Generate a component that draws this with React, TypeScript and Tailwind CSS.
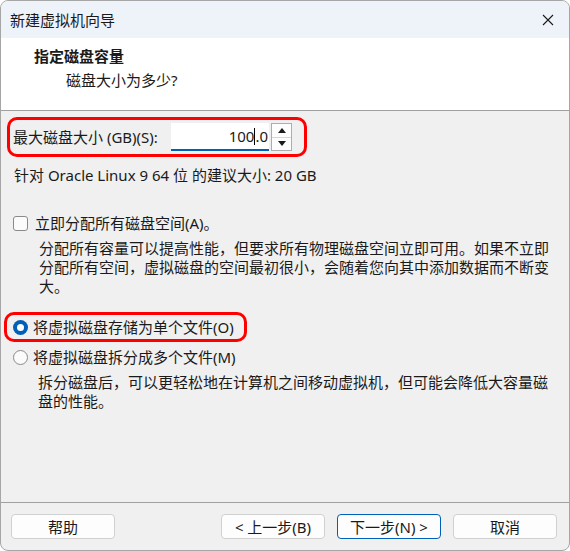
import { useState } from "react";

const font = "font-['Noto_Sans','Noto_Sans_CJK_SC',sans-serif]";

function Btn({ label, primary }: { label: React.ReactNode; primary?: boolean }) {
  return (
    <button
      className={
        "w-[104px] h-[25px] rounded-[4px] bg-[#fdfdfd] text-[15px] leading-[20px] text-[#1a1a1a] border " +
        (primary ? "border-[#005fb8]" : "border-[#d0d0d0]")
      }
    >
      {label}
    </button>
  );
}

function Radio({ on }: { on: boolean }) {
  return (
    <span
      className={
        "w-[15px] h-[15px] rounded-full flex items-center justify-center " +
        (on ? "bg-[#005fb8]" : "border border-[#8a8a8a] bg-[#fbfbfb]")
      }
    >
      {on && <span className="w-[7px] h-[7px] rounded-full bg-white" />}
    </span>
  );
}

export default function App() {
  const [alloc, setAlloc] = useState(false);
  const [single, setSingle] = useState(true);

  return (
    <div className={"w-[570px] h-[551px] bg-white text-[15px] text-[#1a1a1a] " + font}>
      <div className="h-full flex flex-col rounded-[8px] border border-[#a6a6a6] overflow-hidden bg-[#f0f0f0]">
        {/* title bar */}
        <div className="h-[37px] shrink-0 bg-[#eef2f9] flex items-center justify-between pl-[9px] pr-[15px]">
          <span className="leading-[20px] mt-[1px]">新建虚拟机向导</span>
          <svg width="12" height="12" viewBox="0 0 12 12" className="mt-[1px]">
            <path d="M1 1L11 11M11 1L1 11" stroke="#1a1a1a" strokeWidth="1.1" />
          </svg>
        </div>

        {/* header */}
        <div className="h-[73px] shrink-0 bg-white border-b border-[#a0a0a0] pl-[33px] pt-[8px]">
          <div className="font-bold leading-[20px]">指定磁盘容量</div>
          <div className="leading-[20px] mt-[4px] pl-[32px]">磁盘大小为多少?</div>
        </div>

        {/* body */}
        <div className="flex-1 flex flex-col">
          <div className="ml-[6px] mt-[6px] w-[300px] h-[40px] border-[3px] border-[#ff0000] rounded-[10px] flex items-center pl-[3px]">
            <span className="w-[158px] leading-[20px]">最大磁盘大小 (GB)(S):</span>
            <div className="w-[98px] h-[28px] bg-white border-b-2 border-[#005fb8] flex items-center justify-end pr-[1px] leading-[20px]">
              100<span className="inline-block w-px h-[17px] bg-black" />.0
            </div>
            <div className="ml-[2px] w-[21px] h-[28px] border border-[#adadad] bg-[#fdfdfd] flex flex-col">
              <div className="flex-1 flex items-center justify-center border-b border-[#d6d6d6]">
                <svg width="8" height="5" viewBox="0 0 8 5"><path d="M4 0L8 5H0Z" fill="#1a1a1a" /></svg>
              </div>
              <div className="flex-1 flex items-center justify-center">
                <svg width="8" height="5" viewBox="0 0 8 5"><path d="M0 0H8L4 5Z" fill="#1a1a1a" /></svg>
              </div>
            </div>
          </div>

          <div className="mt-[8px] pl-[13px] leading-[20px]">针对 Oracle Linux 9 64 位 的建议大小: 20 GB</div>

          <label className="mt-[28px] ml-[12px] flex items-center leading-[20px]" onClick={() => setAlloc(!alloc)}>
            <span className="w-[15px] h-[15px] rounded-[3px] border border-[#8a8a8a] bg-[#fbfbfb]" />
            <span className="ml-[7px]">立即分配所有磁盘空间(A)。</span>
          </label>
          <p className="mt-[6px] pl-[38px] leading-[19px] whitespace-nowrap">
            分配所有容量可以提高性能，但要求所有物理磁盘空间立即可用。如果不立即
            <br />
            分配所有空间，虚拟磁盘的空间最初很小，会随着您向其中添加数据而不断变
            <br />
            大。
          </p>

          <div className="mt-[16px] ml-[3px] w-[243px] h-[30px] border-[3px] border-[#ff0000] rounded-[10px] flex items-center pl-[6px]">
            <label className="flex items-center leading-[20px]" onClick={() => setSingle(true)}>
              <Radio on={single} />
              <span className="ml-[5px]">将虚拟磁盘存储为单个文件(O)</span>
            </label>
          </div>

          <label className="mt-[5px] ml-[12px] flex items-center leading-[20px]" onClick={() => setSingle(false)}>
            <Radio on={!single} />
            <span className="ml-[5px]">将虚拟磁盘拆分成多个文件(M)</span>
          </label>
          <p className="mt-[6px] pl-[37px] leading-[19px] whitespace-nowrap">
            拆分磁盘后，可以更轻松地在计算机之间移动虚拟机，但可能会降低大容量磁
            <br />
            盘的性能。
          </p>
        </div>

        {/* footer */}
        <div className="h-[48px] shrink-0 border-t border-[#a0a0a0] flex items-start pt-[11px] pl-[10px] pr-[12px]">
          <Btn label="帮助" />
          <div className="flex-1" />
          <div className="flex gap-[12px]">
            <Btn label="< 上一步(B)" />
            <Btn label="下一步(N) >" primary />
            <Btn label="取消" />
          </div>
        </div>
      </div>
    </div>
  );
}
